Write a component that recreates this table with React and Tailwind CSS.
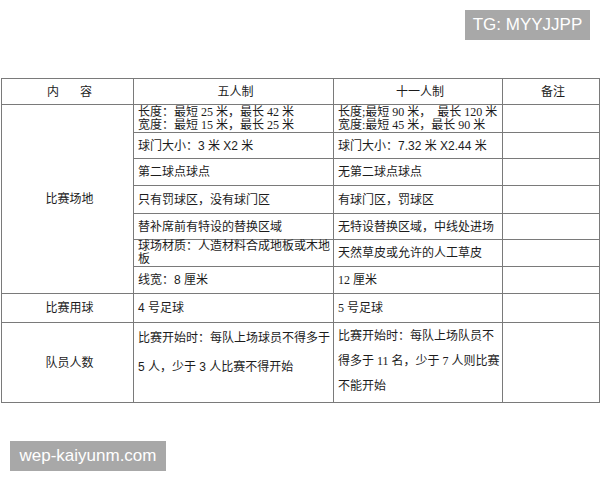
const serif = 'font-["Liberation_Serif","Noto_Sans_CJK_SC",serif]';
const sans = 'font-["Liberation_Sans","Noto_Sans_CJK_SC",sans-serif]';

const cell = "border border-[#7a7a7a] pl-[4px] pr-0 align-middle whitespace-nowrap overflow-visible";

const App = () => {
  return (
    <div className="w-[600px] h-[480px] bg-white flex flex-col text-[#1c1c1c] overflow-hidden">
      {/* top watermark */}
      <div className="flex justify-end pt-[10px] pr-[10px]">
        <div className={`${sans} w-[125px] h-[30px] bg-[#a8a8a8] text-white text-[17px] flex items-center justify-center`}>
          TG: MYYJJPP
        </div>
      </div>

      <div className="mt-[38px] pl-px">
        <table className={`${serif} table-fixed border-collapse w-[598px] text-[12px] leading-[14px]`}>
          <colgroup>
            <col className="w-[132px]" />
            <col className="w-[200px]" />
            <col className="w-[169px]" />
            <col className="w-[97px]" />
          </colgroup>
          <tbody>
            <tr className="h-[26px]">
              <td className={`${cell} text-center pl-0`}>
                <span className="inline-flex gap-[21px]">
                  <span>内</span>
                  <span>容</span>
                </span>
              </td>
              <td className={`${cell} text-center pl-0`}>五人制</td>
              <td className={`${cell} text-center pl-0`}>十一人制</td>
              <td className={`${cell} text-center pl-0`}>备注</td>
            </tr>

            <tr className="h-[28px]">
              <td rowSpan={7} className={`${cell} text-center pl-0`}>比赛场地</td>
              <td className={`${cell} leading-[13px]`}>
                长度：最短 25 米，最长 42 米
                <br />
                宽度：最短 15 米，最长 25 米
              </td>
              <td className={`${cell} leading-[13px]`}>
                长度;最短 90 米，&nbsp; 最长 120 米
                <br />
                宽度:最短 45 米，最长 90 米
              </td>
              <td className={cell}></td>
            </tr>
            <tr className="h-[26px]">
              <td className={`${cell} ${sans}`}>球门大小：3 米 X2 米</td>
              <td className={`${cell} ${sans}`}>球门大小：7.32 米 X2.44 米</td>
              <td className={cell}></td>
            </tr>
            <tr className="h-[27px]">
              <td className={cell}>第二球点球点</td>
              <td className={cell}>无第二球点球点</td>
              <td className={cell}></td>
            </tr>
            <tr className="h-[28px]">
              <td className={cell}>只有罚球区，没有球门区</td>
              <td className={cell}>有球门区，罚球区</td>
              <td className={cell}></td>
            </tr>
            <tr className="h-[26px]">
              <td className={cell}>替补席前有特设的替换区域</td>
              <td className={cell}>无特设替换区域，中线处进场</td>
              <td className={cell}></td>
            </tr>
            <tr className="h-[27px]">
              <td className={`${cell} leading-[13px]`}>
                球场材质：人造材料合成地板或木地
                <br />
                板
              </td>
              <td className={cell}>天然草皮或允许的人工草皮</td>
              <td className={cell}></td>
            </tr>
            <tr className="h-[27px]">
              <td className={`${cell} ${sans}`}>线宽：8 厘米</td>
              <td className={cell}>12 厘米</td>
              <td className={cell}></td>
            </tr>

            <tr className="h-[29px]">
              <td className={`${cell} text-center pl-0 border-t-[#5a5a5a]`}>比赛用球</td>
              <td className={`${cell} ${sans} border-t-[#5a5a5a]`}>4 号足球</td>
              <td className={`${cell} border-t-[#5a5a5a]`}>5 号足球</td>
              <td className={`${cell} border-t-[#5a5a5a]`}></td>
            </tr>

            <tr className="h-[80px]">
              <td className={`${cell} text-center pl-0`}>队员人数</td>
              <td className={`${cell} ${sans} align-top pt-[1px] leading-[29px]`}>
                比赛开始时：每队上场球员不得多于
                <br />
                5 人，少于 3 人比赛不得开始
              </td>
              <td className={`${cell} align-top pt-[1px] leading-[25px]`}>
                比赛开始时：每队上场队员不
                <br />
                得多于 11 名，少于 7 人则比赛
                <br />
                不能开始
              </td>
              <td className={cell}></td>
            </tr>
          </tbody>
        </table>
      </div>

      {/* bottom watermark */}
      <div className="mt-[38px] pl-[10px]">
        <div className={`${sans} w-[156px] h-[30px] bg-[#a8a8a8] text-white text-[17px] flex items-center justify-center`}>
          wep-kaiyunm.com
        </div>
      </div>
    </div>
  );
};

export default App;
